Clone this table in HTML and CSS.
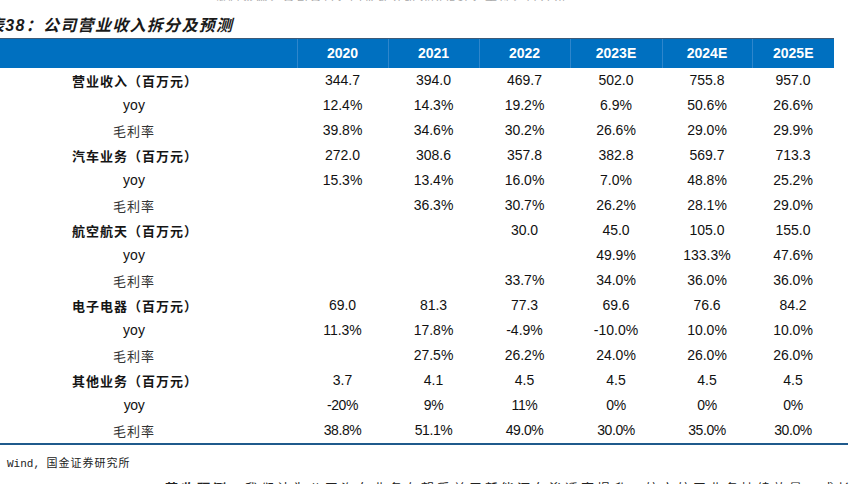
FILE: index.html
```html
<!DOCTYPE html>
<html lang="zh-CN">
<head>
<meta charset="utf-8">
<title>公司营业收入拆分及预测</title>
<link rel="stylesheet" href="styles.css">
</head>
<body>
<div class="page">
  <div class="topcut">资料来源：公司公告，国金证券研究所整理，单位：百万元</div>
  <div class="title">表38：公司营业收入拆分及预测</div>
  <div class="tablewrap">
    <table class="fin">
      <colgroup>
        <col class="c-label">
        <col class="c-y"><col class="c-y"><col class="c-y"><col class="c-y4"><col class="c-y5"><col class="c-y6">
      </colgroup>
      <thead>
        <tr>
          <th></th><th>2020</th><th>2021</th><th>2022</th><th>2023E</th><th>2024E</th><th>2025E</th>
        </tr>
      </thead>
      <tbody>
        <tr class="cat"><td class="lbl">营业收入（百万元）</td><td>344.7</td><td>394.0</td><td>469.7</td><td>502.0</td><td>755.8</td><td>957.0</td></tr>
        <tr><td class="yoy">yoy</td><td>12.4%</td><td>14.3%</td><td>19.2%</td><td>6.9%</td><td>50.6%</td><td>26.6%</td></tr>
        <tr><td class="gm">毛利率</td><td>39.8%</td><td>34.6%</td><td>30.2%</td><td>26.6%</td><td>29.0%</td><td>29.9%</td></tr>
        <tr class="cat"><td class="lbl">汽车业务（百万元）</td><td>272.0</td><td>308.6</td><td>357.8</td><td>382.8</td><td>569.7</td><td>713.3</td></tr>
        <tr><td class="yoy">yoy</td><td>15.3%</td><td>13.4%</td><td>16.0%</td><td>7.0%</td><td>48.8%</td><td>25.2%</td></tr>
        <tr><td class="gm">毛利率</td><td></td><td>36.3%</td><td>30.7%</td><td>26.2%</td><td>28.1%</td><td>29.0%</td></tr>
        <tr class="cat"><td class="lbl">航空航天（百万元）</td><td></td><td></td><td>30.0</td><td>45.0</td><td>105.0</td><td>155.0</td></tr>
        <tr><td class="yoy">yoy</td><td></td><td></td><td></td><td>49.9%</td><td>133.3%</td><td>47.6%</td></tr>
        <tr><td class="gm">毛利率</td><td></td><td></td><td>33.7%</td><td>34.0%</td><td>36.0%</td><td>36.0%</td></tr>
        <tr class="cat"><td class="lbl">电子电器（百万元）</td><td>69.0</td><td>81.3</td><td>77.3</td><td>69.6</td><td>76.6</td><td>84.2</td></tr>
        <tr><td class="yoy">yoy</td><td>11.3%</td><td>17.8%</td><td>-4.9%</td><td>-10.0%</td><td>10.0%</td><td>10.0%</td></tr>
        <tr><td class="gm">毛利率</td><td></td><td>27.5%</td><td>26.2%</td><td>24.0%</td><td>26.0%</td><td>26.0%</td></tr>
        <tr class="cat"><td class="lbl">其他业务（百万元）</td><td>3.7</td><td>4.1</td><td>4.5</td><td>4.5</td><td>4.5</td><td>4.5</td></tr>
        <tr class="narrow"><td class="yoy">yoy</td><td>-20%</td><td>9%</td><td>11%</td><td>0%</td><td>0%</td><td>0%</td></tr>
        <tr class="narrow"><td class="gm">毛利率</td><td>38.8%</td><td>51.1%</td><td>49.0%</td><td>30.0%</td><td>35.0%</td><td>30.0%</td></tr>
      </tbody>
    </table>
  </div>
  <div class="source">Wind, <span class="cn">国金证券研究所</span></div>
  <div class="bottomcut"><b>营收预测：</b>我们认为公司汽车业务有望受益于新能源车渗透率提升，航空航天业务持续放量，成长空间广阔</div>
</div>
</body>
</html>
```

FILE: styles.css
```css
* { box-sizing: border-box; }
html, body {
  margin: 0;
  padding: 0;
  background: #ffffff;
}
body {
  width: 854px;
  height: 484px;
  overflow: hidden;
  font-family: "Liberation Sans", "Noto Sans CJK SC", sans-serif;
  color: #111;
}
.page {
  width: 854px;
}
.topcut {
  height: 10px;
  margin-top: -9px;
  padding-left: 215px;
  font-family: "Noto Sans CJK SC", sans-serif;
  font-size: 12px;
  line-height: 12px;
  letter-spacing: 1.5px;
  color: #aaa;
  white-space: nowrap;
  overflow: hidden;
}
.title {
  margin-top: 13px;
  margin-left: -12px;
  height: 24px;
  line-height: 24px;
  font-family: "Liberation Sans", "Noto Sans CJK SC", sans-serif;
  font-size: 16px;
  font-weight: 700;
  font-style: italic;
  letter-spacing: 1.3px;
  color: #1a1a1a;
  white-space: nowrap;
}
.tablewrap {
  margin-left: -29px;
  width: 877px;
  border-bottom: 2px solid #1f5a8c;
}
.fin {
  width: 863px;
  border-collapse: collapse;
  table-layout: fixed;
}
.c-label { width: 326px; }
.c-y { width: 91px; }
.c-y4 { width: 92px; }
.c-y5 { width: 90px; }
.c-y6 { width: 82px; }
.fin thead th {
  height: 29px;
  padding: 0;
  background: #0070c0;
  border-top: 1px solid #3d5a78;
  border-left: 1px solid #2e86cc;
  color: #ffffff;
  font-family: "Liberation Sans", sans-serif;
  font-size: 14px;
  font-weight: 700;
  text-align: center;
  vertical-align: middle;
}
.fin thead th:first-child { border-left: none; }
.fin tbody td {
  height: 25px;
  padding: 0;
  text-align: center;
  vertical-align: middle;
  font-size: 14px;
  color: #111;
  white-space: nowrap;
}
.fin tbody td.lbl {
  font-family: "Noto Sans CJK SC", sans-serif;
  font-size: 13px;
  font-weight: 700;
  letter-spacing: 1px;
  padding-left: 2px;
  color: #151515;
}
.fin tbody td.yoy {
  font-family: "Liberation Sans", sans-serif;
  font-size: 14px;
}
.fin tbody td.gm {
  font-family: "Noto Sans CJK SC", sans-serif;
  font-size: 13px;
  font-weight: 400;
  letter-spacing: 1px;
  color: #333;
}
.fin tbody tr.narrow td {
  letter-spacing: -0.4px;
}
.fin tbody tr.narrow td.gm { letter-spacing: 1px; }
.source {
  margin-top: 9px;
  padding-left: 7px;
  height: 16px;
  line-height: 16px;
  font-family: "Liberation Mono", "Noto Sans CJK SC", monospace;
  font-size: 11px;
  color: #222;
  white-space: nowrap;
}
.source .cn {
  font-family: "Noto Sans CJK SC", sans-serif;
  letter-spacing: 1px;
}
.bottomcut {
  margin-top: 9px;
  padding-left: 165px;
  font-family: "Noto Sans CJK SC", sans-serif;
  font-size: 13px;
  line-height: 18px;
  letter-spacing: 3px;
  color: #222;
  white-space: nowrap;
}
```
